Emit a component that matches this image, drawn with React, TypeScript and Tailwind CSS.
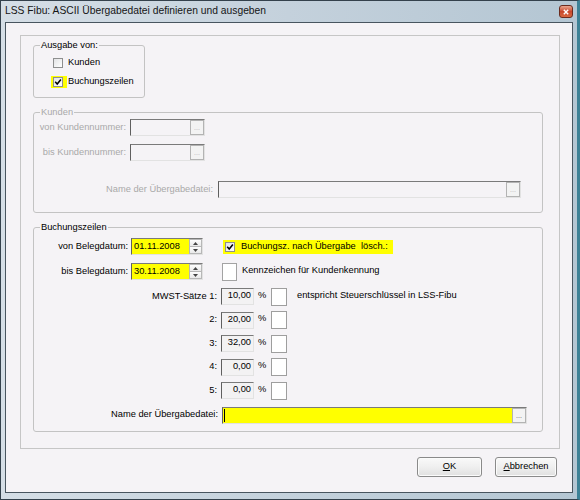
import React from 'react';

// Vista-style dialog "ASCII Übergabedatei"

const CheckMark = () => (
  <svg viewBox="0 0 10 10" className="w-[8px] h-[8px]">
    <path d="M1.5 4.8 L4 7.6 L8.6 1.8" fill="none" stroke="#000" strokeWidth="1.9" />
  </svg>
);

function CheckBox({ checked }: { checked?: boolean }) {
  return (
    <span className="flex items-center justify-center w-[10px] h-[10px] border border-[#8e8f8f] bg-gradient-to-br from-[#e2e3e5] to-white">
      {checked && <CheckMark />}
    </span>
  );
}

function Group({
  label,
  disabled,
  className,
  children,
}: {
  label: string;
  disabled?: boolean;
  className: string;
  children: React.ReactNode;
}) {
  return (
    <div className={`relative shrink-0 border border-[#c3c3c3] rounded-[3px] ${className}`}>
      <span
        className={`absolute -top-[7px] left-[6px] px-[1px] leading-[12px] bg-[#f5f3f6] ${
          disabled ? 'text-[#a9a9a9]' : 'text-black'
        }`}
      >
        {label}
      </span>
      {children}
    </div>
  );
}

function Dots({ disabled }: { disabled?: boolean }) {
  return (
    <span
      className={`w-[14px] shrink-0 flex items-end justify-center pb-[3px] border border-[#b3b3b3] bg-[#f3f3f3] text-[7px] leading-none ${
        disabled ? 'text-[#b5b5b5]' : 'text-[#555]'
      }`}
    >
      ...
    </span>
  );
}

function Spinner() {
  return (
    <span className="w-[13px] shrink-0 flex flex-col">
      <span className="flex-1 flex items-center justify-center border border-[#b7b7b7] bg-gradient-to-b from-[#fdfdfd] to-[#e9e9e9]">
        <svg width="5" height="3" viewBox="0 0 5 3">
          <path d="M0 3 L2.5 0 L5 3Z" fill="#444" />
        </svg>
      </span>
      <span className="flex-1 flex items-center justify-center border border-t-0 border-[#b7b7b7] bg-gradient-to-b from-[#fdfdfd] to-[#e9e9e9]">
        <svg width="5" height="3" viewBox="0 0 5 3">
          <path d="M0 0 L2.5 3 L5 0Z" fill="#444" />
        </svg>
      </span>
    </span>
  );
}

const sunken =
  'flex items-stretch border border-t-[#7a7a7a] border-l-[#5f5f5f] border-r-[#e2e2e2] border-b-[#e2e2e2]';

function DateField({ value }: { value: string }) {
  return (
    <div className={`${sunken} w-[72px] h-[17px] ml-[3px]`}>
      <span className="flex-1 flex items-center pl-[2px] bg-[#ffff00]">{value}</span>
      <Spinner />
    </div>
  );
}

function MwstRow({ label, value, first }: { label: string; value: string; first?: boolean }) {
  return (
    <div className={`flex items-center h-[17px] ${first ? 'mt-[8px]' : 'mt-[6.5px]'}`}>
      <span className="w-[183px] text-right">{label}</span>
      <span className={`${sunken} w-[33px] h-[17px] ml-[4px] items-center justify-end pr-[2px] bg-[#f3f2f3]`}>
        {value}
      </span>
      <span className="w-[9px] ml-[4px] -mt-[2px]">%</span>
      <span className="w-[16px] h-[18px] ml-[4px] bg-white border border-[#9e9e9e]" />
      {first && <span className="ml-[10px] -mt-[2px]">entspricht Steuerschlüssel in LSS-Fibu</span>}
    </div>
  );
}

function DlgButton({ children, className }: { children: React.ReactNode; className: string }) {
  return (
    <button
      className={`h-[20px] flex items-center justify-center rounded-[3px] border border-[#8a8a8a] bg-gradient-to-b from-[#f9f9f9] via-[#efefef] to-[#e0e0e0] shadow-[inset_0_0_0_1px_#fbfbfb] ${className}`}
    >
      {children}
    </button>
  );
}

export default function App() {
  return (
    <div className="w-[580px] h-[500px] flex flex-col overflow-hidden border border-[#34414c] border-r-[3px] border-r-[#3d8196] bg-gradient-to-r from-[#d5dee6] via-[#c4d1dc] to-[#b4c6d3] font-['Liberation_Sans',Arial,sans-serif] text-[9.3px] text-black">
      {/* Title bar */}
      <div className="h-[21px] shrink-0 flex items-center justify-between pl-[4px] pr-[4px]">
        <span className="text-[10.3px] leading-none text-[#151515]">
          LSS Fibu: ASCII Übergabedatei definieren und ausgeben
        </span>
        <span className="w-[14px] h-[13px] flex items-center justify-center rounded-[3px] border border-[#6b2b1e] bg-gradient-to-b from-[#e9a58f] via-[#c8472c] to-[#d9673f]">
          <svg width="6" height="6" viewBox="0 0 6 6">
            <path d="M0.8 0.8 L5.2 5.2 M5.2 0.8 L0.8 5.2" stroke="#fff" strokeWidth="1.4" />
          </svg>
        </span>
      </div>

      {/* Client area */}
      <div className="mx-[4px] h-[471px] shrink-0 flex flex-col border border-[#48555f] bg-[#f5f3f6]">
        <div className="mt-[12px] ml-[14px] w-[540px] h-[414px] shrink-0 flex flex-col pl-[12px] pt-[9px] border border-[#c6c6c6]">
          {/* Ausgabe von */}
          <Group label="Ausgabe von:" className="w-[112px] h-[53px]">
            <div className="flex flex-col gap-[6.5px] pt-[11px] pl-[16.5px]">
              <div className="flex items-center h-[12px]">
                <span className="w-[16px] h-[12px] flex items-center pl-[2.5px]">
                  <CheckBox />
                </span>
                <span className="ml-[1.5px]">Kunden</span>
              </div>
              <div className="flex items-center h-[12px]">
                <span className="w-[16px] h-[12px] flex items-center pl-[2.5px] bg-[#ffff00]">
                  <CheckBox checked />
                </span>
                <span className="ml-[1.5px]">Buchungszeilen</span>
              </div>
            </div>
          </Group>

          {/* Kunden (disabled) */}
          <Group label="Kunden" disabled className="mt-[14px] w-[510px] h-[101px]">
            <div className="flex flex-col pt-[6px] text-[#a9a9a9]">
              <div className="flex items-center h-[17px]">
                <span className="w-[92px] text-right">von Kundennummer:</span>
                <div className={`${sunken} w-[75px] h-[17px] ml-[4px]`}>
                  <span className="flex-1" />
                  <Dots disabled />
                </div>
              </div>
              <div className="flex items-center h-[17px] mt-[8px]">
                <span className="w-[92px] text-right">bis Kundennummer:</span>
                <div className={`${sunken} w-[75px] h-[17px] ml-[4px]`}>
                  <span className="flex-1" />
                  <Dots disabled />
                </div>
              </div>
              <div className="flex items-center h-[17px] mt-[20px]">
                <span className="w-[179px] text-right">Name der Übergabedatei:</span>
                <div className={`${sunken} w-[303px] h-[17px] ml-[5px]`}>
                  <span className="flex-1" />
                  <Dots disabled />
                </div>
              </div>
            </div>
          </Group>

          {/* Buchungszeilen */}
          <Group label="Buchungszeilen" className="mt-[14px] w-[510px] h-[205px]">
            <div className="flex flex-col pt-[10px]">
              <div className="flex items-center h-[17px]">
                <span className="w-[94px] text-right">von Belegdatum:</span>
                <DateField value="01.11.2008" />
                <span className="ml-[20px] w-[170px] h-[14px] flex items-center pl-[2px] bg-[#ffff00]">
                  <CheckBox checked />
                  <span className="ml-[6px] whitespace-pre">Buchungsz. nach Übergabe  lösch.:</span>
                </span>
              </div>
              <div className="flex items-center h-[17px] mt-[8px]">
                <span className="w-[94px] text-right">bis Belegdatum:</span>
                <DateField value="30.11.2008" />
                <span className="ml-[19px] w-[15px] h-[18px] bg-white border border-[#a3a3a3]" />
                <span className="ml-[5px] -mt-[2px]">Kennzeichen für Kundenkennung</span>
              </div>

              <MwstRow label="MWST-Sätze 1:" value="10,00" first />
              <MwstRow label="2:" value="20,00" />
              <MwstRow label="3:" value="32,00" />
              <MwstRow label="4:" value="0,00" />
              <MwstRow label="5:" value="0,00" />

              <div className="flex items-center h-[17px] mt-[7.5px]">
                <span className="w-[184px] text-right">Name der Übergabedatei:</span>
                <div className={`${sunken} w-[305px] h-[17px] ml-[4px]`}>
                  <span className="flex-1 flex items-center bg-[#ffff00]">
                    <span className="w-[1px] h-[13px] ml-[1px] bg-black" />
                  </span>
                  <Dots />
                </div>
              </div>
            </div>
          </Group>
        </div>

        {/* Buttons */}
        <div className="mt-[8px] flex justify-end gap-[13px] pr-[15px]">
          <DlgButton className="w-[65px]">
            <span>
              <span className="underline underline-offset-[1px]">O</span>K
            </span>
          </DlgButton>
          <DlgButton className="w-[62px]">
            <span>
              <span className="underline underline-offset-[1px]">A</span>bbrechen
            </span>
          </DlgButton>
        </div>
      </div>
    </div>
  );
}
